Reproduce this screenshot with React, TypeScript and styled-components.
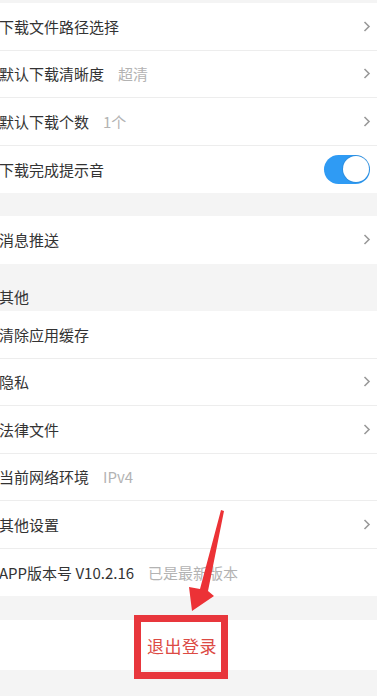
import React from "react";
import styled, { createGlobalStyle } from "styled-components";

const Global = createGlobalStyle`
  html, body { margin: 0; padding: 0; background: #f4f4f4; }
  body { font-family: "Noto Sans CJK SC", "Noto Sans", sans-serif; }
  * { box-sizing: border-box; }
`;

const Page = styled.div`
  position: relative;
  width: 377px;
  height: 696px;
  overflow: hidden;
  background: #f4f4f4;
  padding-top: 3px;
  display: flex;
  flex-direction: column;
`;

const Group = styled.div<{ $gapAfter?: number }>`
  background: #fff;
  margin-bottom: ${(p) => p.$gapAfter ?? 0}px;
`;

const Row = styled.div<{ $last?: boolean }>`
  height: 47.5px;
  display: flex;
  align-items: center;
  padding: 0 6px 0 0;
  border-bottom: ${(p) => (p.$last ? "none" : "1px solid #ededed")};
`;

const Label = styled.span`
  margin-left: -1px;
  font-size: 15px;
  color: #333;
  white-space: nowrap;
`;

const Value = styled.span`
  margin-left: 14px;
  font-size: 15px;
  color: #b3b3b3;
  white-space: nowrap;
`;

const Spacer = styled.div`
  flex: 1;
`;

const Chevron = styled.svg`
  width: 8px;
  height: 11px;
`;

const Toggle = styled.div`
  width: 46px;
  height: 29px;
  border-radius: 15px;
  background: #2f9bf4;
  position: relative;
  margin-right: 1px;
`;

const Knob = styled.div`
  position: absolute;
  right: 1.5px;
  top: 1.5px;
  width: 26px;
  height: 26px;
  border-radius: 50%;
  background: #fff;
  box-shadow: 0 0 0 1px rgba(0, 0, 0, 0.08);
`;

const SectionHeader = styled.div`
  height: 47.5px;
  display: flex;
  align-items: flex-end;
  padding-bottom: 4px;
`;

const HeaderText = styled.span`
  margin-left: -1px;
  font-size: 15px;
  color: #333;
`;

const LogoutRow = styled.div`
  position: relative;
  height: 50px;
  background: #fff;
  display: flex;
  align-items: center;
  justify-content: center;
  padding-right: 13px;
  margin-top: 24px;
`;

const LogoutText = styled.span`
  font-size: 17px;
  color: #dc4a44;
  font-weight: 400;
  letter-spacing: 0.5px;
`;

const Highlight = styled.div`
  position: absolute;
  left: 134px;
  top: -5px;
  width: 94px;
  height: 64px;
  border: 7px solid #e8363c;
`;

const ArrowOverlay = styled.svg`
  position: absolute;
  left: 0;
  top: 0;
  width: 377px;
  height: 696px;
  pointer-events: none;
`;

const ChevronIcon = () => (
  <Chevron viewBox="0 0 8 11">
    <path d="M1.5 1 L6 5.5 L1.5 10" fill="none" stroke="#9a9a9a" strokeWidth="1.6" />
  </Chevron>
);

type Item = { label: string; value?: string; chevron?: boolean; toggle?: boolean };

const group1: Item[] = [
  { label: "下载文件路径选择", chevron: true },
  { label: "默认下载清晰度", value: "超清", chevron: true },
  { label: "默认下载个数", value: "1个", chevron: true },
  { label: "下载完成提示音", toggle: true },
];

const group3: Item[] = [
  { label: "清除应用缓存" },
  { label: "隐私", chevron: true },
  { label: "法律文件", chevron: true },
  { label: "当前网络环境", value: "IPv4" },
  { label: "其他设置", chevron: true },
  { label: "APP版本号 V10.2.16", value: "已是最新版本" },
];

const renderRows = (items: Item[]) =>
  items.map((it, i) => (
    <Row key={it.label} $last={i === items.length - 1}>
      <Label>{it.label}</Label>
      {it.value && <Value>{it.value}</Value>}
      <Spacer />
      {it.chevron && <ChevronIcon />}
      {it.toggle && (
        <Toggle>
          <Knob />
        </Toggle>
      )}
    </Row>
  ));

export default function App() {
  return (
    <>
      <Global />
      <Page>
        <Group $gapAfter={23}>{renderRows(group1)}</Group>
        <Group>{renderRows([{ label: "消息推送", chevron: true }])}</Group>
        <SectionHeader>
          <HeaderText>其他</HeaderText>
        </SectionHeader>
        <Group>{renderRows(group3)}</Group>
        <LogoutRow>
          <LogoutText>退出登录</LogoutText>
          <Highlight />
        </LogoutRow>
        <ArrowOverlay viewBox="0 0 377 696">
          <polygon
            points="221,510 224,511 208,591 214,596 192,611 189,587 200,589"
            fill="#ec3236"
          />
        </ArrowOverlay>
      </Page>
    </>
  );
}
